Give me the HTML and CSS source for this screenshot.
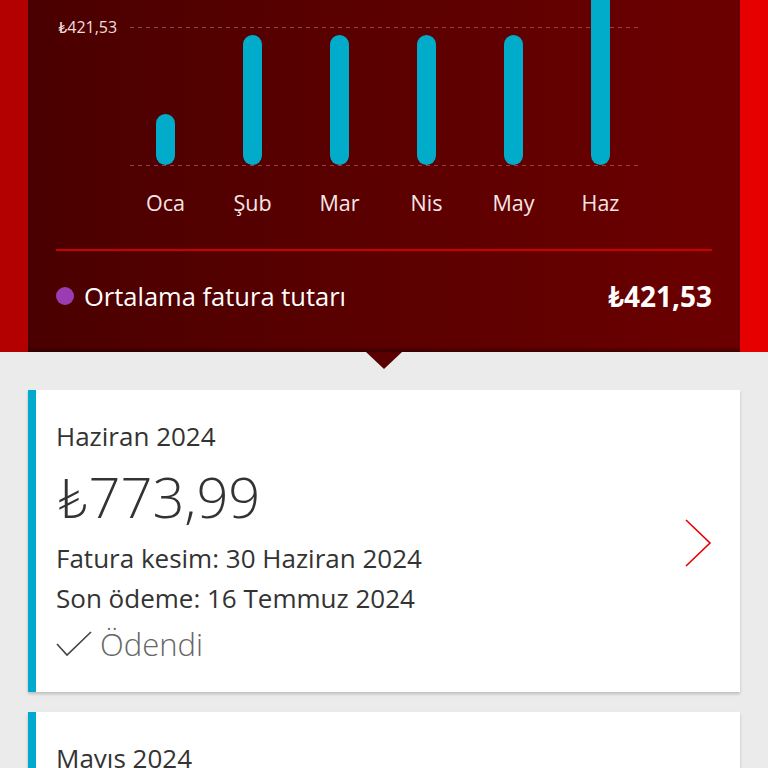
FILE: index.html
```html
<!DOCTYPE html>
<html lang="tr">
<head>
    <meta charset="UTF-8">
    <title>Faturalarım</title>
    <link rel="stylesheet" href="styles.css">
</head>
<body>

<!-- Grafik alanı -->
<div class="hero">
    <div class="panel">
        <div class="chart">
            <span class="axis-label">₺421,53</span>
            <div class="bars">
                <div class="col"><div class="track"><div class="bar" style="height:51px"></div></div><span class="month">Oca</span></div>
                <div class="col"><div class="track"><div class="bar" style="height:130px"></div></div><span class="month">Şub</span></div>
                <div class="col"><div class="track"><div class="bar" style="height:130px"></div></div><span class="month">Mar</span></div>
                <div class="col"><div class="track"><div class="bar" style="height:130px"></div></div><span class="month">Nis</span></div>
                <div class="col"><div class="track"><div class="bar" style="height:130px"></div></div><span class="month">May</span></div>
                <div class="col"><div class="track"><div class="bar" style="height:230px"></div></div><span class="month">Haz</span></div>
            </div>
        </div>
        <div class="divider"></div>
        <div class="legend">
            <span class="dot"></span>
            <span class="legend-text">Ortalama fatura tutarı</span>
            <span class="legend-value">₺421,53</span>
        </div>
    </div>
</div>

<!-- Fatura listesi -->
<div class="list">
    <div class="bill">
        <div class="bill-info">
            <div class="bill-month">Haziran 2024</div>
            <div class="bill-amount">₺773,99</div>
            <div class="bill-line first">Fatura kesim: 30 Haziran 2024</div>
            <div class="bill-line">Son ödeme: 16 Temmuz 2024</div>
            <div class="bill-status">
                <svg class="check" width="36" height="26" viewBox="0 0 36 26"><path d="M1 13 L11 24 L35 1" fill="none" stroke="#444" stroke-width="1.6"/></svg>
                Ödendi
            </div>
        </div>
        <svg class="chevron" width="28" height="50" viewBox="0 0 28 50"><path d="M2 2 L26 25 L2 48" fill="none" stroke="#e60000" stroke-width="1.6"/></svg>
    </div>
    <div class="bill">
        <div class="bill-info">
            <div class="bill-month">Mayıs 2024</div>
        </div>
    </div>
</div>

</body>
</html>
```

FILE: styles.css
```css
/* Genel */
body {
    margin: 0;
    background-color: #ebebeb;
    font-family: "Open Sans", Lato, sans-serif;
    color: #333;
    overflow: hidden;
}

/* Kırmızı üst bölüm */
.hero {
    position: relative;
    padding: 0 28px;
    background: linear-gradient(to right, #b30000 0, #b30000 50%, #e60000 50%, #e60000 100%);
}
.hero::after {
    content: "";
    position: absolute;
    left: 366px;
    bottom: -17px;
    border-left: 18px solid transparent;
    border-right: 18px solid transparent;
    border-top: 17px solid #590000;
}
.panel {
    height: 352px;
    box-sizing: border-box;
    padding: 0 28px;
    overflow: hidden;
    background: linear-gradient(to right, #4a0000, #6c0000);
    box-shadow: inset 0 -3px 3px rgba(0, 0, 0, 0.35);
}

/* Grafik */
.chart {
    position: relative;
}
.chart::before,
.chart::after {
    content: "";
    position: absolute;
    left: 74px;
    width: 508px;
    height: 1px;
    background: repeating-linear-gradient(to right, #a03a4c 0, #a03a4c 4px, transparent 4px, transparent 8px);
}
.chart::before {
    top: 27px;
}
.chart::after {
    top: 165px;
}
.axis-label {
    position: absolute;
    left: 2px;
    top: 17px;
    font-size: 16px;
    line-height: 20px;
    color: #f3dede;
}
.bars {
    position: relative;
    z-index: 1;
    display: flex;
    margin-left: 66px;
}
.col {
    width: 87px;
    display: flex;
    flex-direction: column;
    align-items: center;
}
.track {
    height: 165px;
    display: flex;
    flex-direction: column;
    justify-content: flex-end;
}
.bar {
    flex-shrink: 0;
    width: 19px;
    border-radius: 10px;
    background-color: #00acca;
}
.month {
    margin-top: 26px;
    font-size: 21.5px;
    line-height: 24px;
    color: #f6e6e6;
}

.divider {
    margin-top: 34px;
    height: 2px;
    background-color: #cc0000;
}

.legend {
    display: flex;
    align-items: center;
    margin-top: 30px;
    height: 30px;
    color: #fff;
}
.dot {
    width: 18px;
    height: 18px;
    border-radius: 50%;
    background-color: #9c3cb4;
    margin-right: 10px;
}
.legend-text {
    font-size: 25.5px;
    flex: 1;
}
.legend-value {
    font-size: 28px;
    font-weight: bold;
}

/* Fatura kartları */
.list {
    display: flex;
    flex-direction: column;
    gap: 20px;
    padding: 38px 28px 0;
}
.bill {
    display: flex;
    align-items: center;
    justify-content: space-between;
    background-color: #fff;
    border-left: 8px solid #00a9ce;
    padding: 31px 28px 28px 20px;
    box-shadow: 0 2px 3px rgba(0, 0, 0, 0.2);
}
.bill-month {
    font-size: 26px;
    line-height: 30px;
}
.bill-amount {
    margin-top: 15px;
    font-size: 56px;
    line-height: 60px;
    font-weight: 300;
}
.bill-line {
    font-size: 26px;
    line-height: 40px;
}
.bill-line.first {
    margin-top: 12px;
}
.bill-status {
    display: flex;
    align-items: center;
    gap: 8px;
    margin-top: 6px;
    font-size: 31px;
    line-height: 40px;
    font-weight: 300;
    color: #666;
}
```
